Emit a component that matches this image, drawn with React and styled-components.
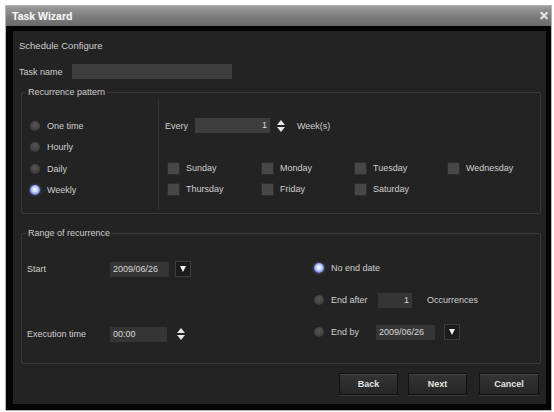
import React from "react";
import styled, { createGlobalStyle } from "styled-components";

const GlobalStyle = createGlobalStyle`
  html, body {
    margin: 0;
    padding: 0;
    background: #ffffff;
  }
  body {
    font-family: "Liberation Sans", Arial, sans-serif;
  }
`;

const Window = styled.div`
  background: #000;
  border: 1px solid #b5b5b5;
  box-sizing: border-box;
  display: flex;
  flex-direction: column;
  height: 406px;
  margin: 5px 0 0 5px;
  width: 547px;
`;

const TitleBar = styled.div`
  align-items: center;
  background: linear-gradient(180deg, #9a9a9a 0%, #7c7c7c 55%, #6a6a6a 100%);
  box-sizing: border-box;
  color: #f4f4f4;
  display: flex;
  flex: none;
  font-size: 10.5px;
  font-weight: bold;
  height: 20px;
  justify-content: space-between;
  padding: 0 2px 0 6px;
  text-shadow: 0 0 1px rgba(255, 255, 255, 0.4);
`;

const Close = styled.span`
  color: #e8e8e8;
  font-size: 12px;
  font-weight: bold;
`;

const Frame = styled.div`
  background: #050505;
  box-sizing: border-box;
  display: flex;
  flex: 1;
  padding: 5px 5px 6px 7px;
`;

const Panel = styled.div`
  background: #232323;
  box-sizing: border-box;
  color: #cfcfcf;
  display: flex;
  flex: 1;
  flex-direction: column;
  font-size: 9px;
  padding: 8px 5px 0 6px;
`;

const Heading = styled.div`
  flex: none;
  font-size: 9.5px;
  height: 14px;
  line-height: 14px;
`;

const Row = styled.div`
  align-items: center;
  display: flex;
  flex: none;
  gap: ${(p) => p.$gap || 4}px;
  height: ${(p) => p.$h || 15}px;
`;

const TaskRow = styled(Row)`
  margin-top: 11px;
`;

const Input = styled.div`
  background: ${(p) => (p.$light ? "#3e3e3e" : "#353535")};
  box-sizing: border-box;
  color: #d8d8d8;
  flex: none;
  font-size: 9px;
  height: 15px;
  line-height: 15px;
  padding: 0 3px;
  text-align: ${(p) => p.$align || "left"};
  width: ${(p) => p.$w}px;
`;

const Group = styled.section`
  border: 1px solid #393939;
  border-radius: 2px;
  box-sizing: border-box;
  display: flex;
  flex: none;
  flex-direction: column;
  height: ${(p) => p.$h}px;
  margin: ${(p) => p.$mt}px 0 0 2px;
`;

const Legend = styled.span`
  align-self: flex-start;
  background: #232323;
  color: #cfcfcf;
  font-size: 9px;
  height: 11px;
  line-height: 11px;
  margin: -6px 0 -5px 4px;
  padding: 0 2px;
  position: relative;
  z-index: 1;
`;

const PatternBody = styled.div`
  display: grid;
  flex: 1;
  grid-template-columns: 137px 1fr;
`;

const RadioColumn = styled.div`
  border-right: 1px solid #333;
  display: flex;
  flex-direction: column;
  gap: 6.5px;
  margin: 6px 0 3px 0;
  padding: 19px 0 0 8px;
`;

const Radio = styled.span`
  background: ${(p) =>
    p.$on
      ? "radial-gradient(circle at 50% 45%, #ffffff 0%, #c9d6ff 35%, #5d7cd8 75%, #2f3f77 100%)"
      : "radial-gradient(circle at 50% 40%, #555 0%, #3d3d3d 70%, #2b2b2b 100%)"};
  border-radius: 50%;
  box-shadow: ${(p) => (p.$on ? "0 0 3px rgba(130,160,255,0.7)" : "none")};
  display: inline-block;
  flex: none;
  height: 10px;
  width: 10px;
`;

const RadioItem = styled(Row)`
  gap: 7px;
`;

const RightPane = styled.div`
  display: flex;
  flex-direction: column;
  padding: 25px 0 0 6px;
`;

const DaysGrid = styled.div`
  display: grid;
  grid-template-columns: 94px 93px 93px 90px;
  margin-top: 28px;
  padding-left: 2px;
  row-gap: 7px;
`;

const Check = styled.span`
  background: #474747;
  border: 1px solid #2c2c2c;
  box-sizing: border-box;
  display: inline-block;
  flex: none;
  height: 13px;
  width: 13px;
`;

const Spin = styled.span`
  display: inline-flex;
  flex-direction: column;
  gap: 2px;
  margin-left: ${(p) => p.$ml || 3}px;
  &::before,
  &::after {
    border-left: 4px solid transparent;
    border-right: 4px solid transparent;
    content: "";
    display: block;
    height: 0;
    width: 0;
  }
  &::before {
    border-bottom: 5px solid #e6e6e6;
  }
  &::after {
    border-top: 5px solid #e6e6e6;
  }
`;

const DropButton = styled.span`
  align-items: center;
  background: #1b1b1b;
  border: 1px solid #3c3c3c;
  box-sizing: border-box;
  display: inline-flex;
  flex: none;
  height: 16px;
  justify-content: center;
  margin-left: 2px;
  width: 16px;
  &::after {
    border-left: 3.5px solid transparent;
    border-right: 3.5px solid transparent;
    border-top: 6px solid #f0f0f0;
    content: "";
  }
`;

const RangeBody = styled.div`
  display: grid;
  flex: 1;
  grid-template-columns: 292px 1fr;
`;

const RangeLeft = styled.div`
  display: flex;
  flex-direction: column;
  padding: 27px 0 0 5px;
`;

const FieldLabel = styled.span`
  flex: none;
  width: 79px;
`;

const RangeRight = styled.div`
  display: flex;
  flex-direction: column;
  gap: 16px;
  padding: 26px 0 0 0;
`;

const Footer = styled.div`
  display: flex;
  flex: none;
  gap: 10px;
  justify-content: flex-end;
  margin-top: 9px;
  padding-right: 2px;
`;

const Button = styled.button`
  background: linear-gradient(180deg, #343434 0%, #262626 100%);
  border: 1px solid #121212;
  box-shadow: inset 0 1px 0 #444, 0 1px 0 #3a3a3a;
  color: #e2e2e2;
  font-family: "Liberation Sans", Arial, sans-serif;
  font-size: 9px;
  font-weight: bold;
  height: 22px;
  margin-left: ${(p) => p.$ml || 0}px;
  padding: 0;
  width: ${(p) => p.$w || 59}px;
`;

const Label = styled.span`
  flex: none;
  margin-left: ${(p) => p.$ml || 0}px;
  width: ${(p) => (p.$w ? `${p.$w}px` : "auto")};
`;

const days = [
  "Sunday",
  "Monday",
  "Tuesday",
  "Wednesday",
  "Thursday",
  "Friday",
  "Saturday",
];

const modes = [
  { label: "One time", on: false },
  { label: "Hourly", on: false },
  { label: "Daily", on: false },
  { label: "Weekly", on: true },
];

const App = () => {
  return (
    <>
      <GlobalStyle />
      <Window>
        <TitleBar>
          <span>Task Wizard</span>
          <Close>✕</Close>
        </TitleBar>
        <Frame>
          <Panel>
            <Heading>Schedule Configure</Heading>
            <TaskRow $gap={9}>
              <span>Task name</span>
              <Input $w={160} $light />
            </TaskRow>

            <Group $h={122} $mt={13}>
              <Legend>Recurrence pattern</Legend>
              <PatternBody>
                <RadioColumn>
                  {modes.map((m) => (
                    <RadioItem key={m.label} $h={15}>
                      <Radio $on={m.on} />
                      <span>{m.label}</span>
                    </RadioItem>
                  ))}
                </RadioColumn>
                <RightPane>
                  <Row $gap={0}>
                    <Label $w={26}>Every</Label>
                    <Input $w={75} $align="right" $light>
                      1
                    </Input>
                    <Spin />
                    <Label $ml={8}>Week(s)</Label>
                  </Row>
                  <DaysGrid>
                    {days.map((d) => (
                      <Row key={d} $gap={6} $h={14}>
                        <Check />
                        <span>{d}</span>
                      </Row>
                    ))}
                  </DaysGrid>
                </RightPane>
              </PatternBody>
            </Group>

            <Group $h={131} $mt={19}>
              <Legend>Range of recurrence</Legend>
              <RangeBody>
                <RangeLeft>
                  <Row $gap={0} $h={16}>
                    <FieldLabel>Start</FieldLabel>
                    <Input $w={59}>2009/06/26</Input>
                    <DropButton />
                  </Row>
                  <Row $gap={0} $h={16} style={{ marginTop: 49 }}>
                    <FieldLabel>Execution time</FieldLabel>
                    <Input $w={57}>00:00</Input>
                    <Spin $ml={6} />
                  </Row>
                </RangeLeft>
                <RangeRight>
                  <RadioItem $h={16}>
                    <Radio $on />
                    <span>No end date</span>
                  </RadioItem>
                  <RadioItem $h={16}>
                    <Radio />
                    <Label $w={40}>End after</Label>
                    <Input $w={34} $align="right">
                      1
                    </Input>
                    <Label $ml={8}>Occurrences</Label>
                  </RadioItem>
                  <RadioItem $h={16}>
                    <Radio />
                    <Label $w={38}>End by</Label>
                    <Input $w={59}>2009/06/26</Input>
                    <DropButton />
                  </RadioItem>
                </RangeRight>
              </RangeBody>
            </Group>

            <Footer>
              <Button $w={59}>Back</Button>
              <Button $w={59}>Next</Button>
              <Button $w={60} $ml={2}>
                Cancel
              </Button>
            </Footer>
          </Panel>
        </Frame>
      </Window>
    </>
  );
};

export default App;
